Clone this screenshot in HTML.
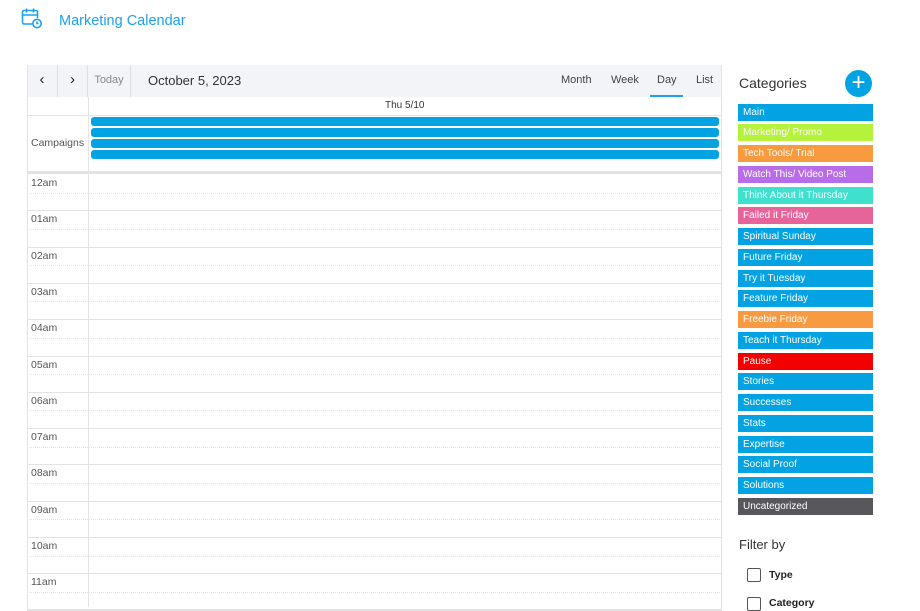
<!DOCTYPE html>
<html><head><meta charset="utf-8"><style>
*{box-sizing:border-box;margin:0;padding:0}
body{width:920px;height:604px;overflow:hidden;background:#fff;font-family:"Liberation Sans",sans-serif;position:relative;color:#333}
.abs{position:absolute}
.title{left:59px;top:13px;font-size:14.5px;color:#1da1e8}
.cal{left:27px;top:65px;width:695px;height:545px;border:1px solid #e3e3e3;border-top:none}
.tb{left:27px;top:65px;width:695px;height:32px;background:#f3f4f8}
.tbtn{top:65px;height:32px;border-right:1px solid #e0e0e0;font-size:11px;color:#888;text-align:center;line-height:30px}
.v{top:65px;font-size:11px;color:#444;line-height:30px}
.bar{left:91px;width:628px;height:9px;background:#03a3e3;border-radius:3px}
.h{left:27px;width:695px;height:1px;background:#e3e3e3}
.d{left:27px;width:695px;border-top:1px dotted #e3e3e3}
.t{left:31px;font-size:10.5px;color:#555}
.cat{left:738px;width:135px;height:17px;font-size:10px;color:#fff;padding-left:5px;line-height:17px;padding-top:1px}
.cb{left:747px;width:14px;height:14px;border:1.5px solid #555;border-radius:2px}
</style></head><body>
<svg class="abs" style="left:21px;top:7px" width="22" height="22" viewBox="0 0 22 22" fill="none" stroke="#1da1e8" stroke-width="1.6"><path d="M11 17H3a1.5 1.5 0 0 1-1.5-1.5V5A1.5 1.5 0 0 1 3 3.5h12A1.5 1.5 0 0 1 16.5 5v6M1.5 8h15M5.5 1.5v4M12.5 1.5v4"/><circle cx="16" cy="16.5" r="4.2"/><path d="M16 14.5v2h1.5"/></svg>
<div class="abs title">Marketing Calendar</div>
<div class="abs tb"></div>
<div class="abs tbtn" style="left:27px;width:31px;color:#222;font-size:15px">‹</div>
<div class="abs tbtn" style="left:58px;width:30px;color:#222;font-size:15px">›</div>
<div class="abs tbtn" style="left:88px;width:43px">Today</div>
<div class="abs" style="left:148px;top:73px;font-size:13px;color:#333">October 5, 2023</div>
<div class="abs v" style="left:561px">Month</div>
<div class="abs v" style="left:611px">Week</div>
<div class="abs v" style="left:657px">Day</div>
<div class="abs" style="left:650px;top:95px;width:33px;height:2px;background:#1da1e8"></div>
<div class="abs v" style="left:696px">List</div>
<div class="abs cal"></div>
<div class="abs" style="left:88px;top:97px;width:1px;height:510px;background:#e3e3e3"></div>
<div class="abs" style="left:385px;top:100px;font-size:10px;color:#333">Thu 5/10</div>
<div class="abs h" style="top:115px"></div>
<div class="abs t" style="top:137px;font-size:10.5px">Campaigns</div>
<div class="abs bar" style="top:117px"></div>
<div class="abs bar" style="top:128px"></div>
<div class="abs bar" style="top:139px"></div>
<div class="abs bar" style="top:150px"></div>
<div class="abs" style="left:27px;top:171px;width:695px;height:3px;background:#e3e3e3"></div>
<div id="hrs"></div>
<div class="abs" style="left:739px;top:75px;font-size:14px;color:#333">Categories</div>
<div class="abs" style="left:845px;top:70px;width:27px;height:27px;border-radius:50%;background:#03a3e3;color:#fff;font-size:24px;text-align:center;line-height:26px">+</div>
<div id="cats"></div>
<div class="abs" style="left:739px;top:537px;font-size:13px;color:#333">Filter by</div>
<div class="abs cb" style="top:568px"></div>
<div class="abs" style="left:769px;top:569px;font-size:10.5px;color:#222;font-weight:bold">Type</div>
<div class="abs cb" style="top:597px"></div>
<div class="abs" style="left:769px;top:597px;font-size:10.5px;color:#222;font-weight:bold">Category</div>
<script>
var h='',L=['12am','01am','02am','03am','04am','05am','06am','07am','08am','09am','10am','11am'];
for(var i=0;i<12;i++){var y=174+i*36.3;h+='<div class="abs h" style="top:'+(y+36.3).toFixed(1)+'px"></div><div class="abs d" style="top:'+(y+18.5).toFixed(1)+'px"></div><div class="abs t" style="top:'+(y+3).toFixed(1)+'px">'+L[i]+'</div>';}
document.getElementById('hrs').innerHTML=h;
var c=[['Main','#03a3e3'],['Marketing/ Promo','#b5f23c'],['Tech Tools/ Trial','#f89a40'],['Watch This/ Video Post','#b86ce8'],['Think About it Thursday','#40e0cf'],['Failed it Friday','#e6649a'],['Spiritual Sunday','#03a3e3'],['Future Friday','#03a3e3'],['Try it Tuesday','#03a3e3'],['Feature Friday','#03a3e3'],['Freebie Friday','#f89a40'],['Teach it Thursday','#03a3e3'],['Pause','#f30000'],['Stories','#03a3e3'],['Successes','#03a3e3'],['Stats','#03a3e3'],['Expertise','#03a3e3'],['Social Proof','#03a3e3'],['Solutions','#03a3e3'],['Uncategorized','#58585c']];
h='';for(i=0;i<c.length;i++)h+='<div class="abs cat" style="top:'+(103.5+i*20.75).toFixed(1)+'px;background:'+c[i][1]+';line-height:15px">'+c[i][0]+'</div>';
document.getElementById('cats').innerHTML=h;
</script>
</body></html>
